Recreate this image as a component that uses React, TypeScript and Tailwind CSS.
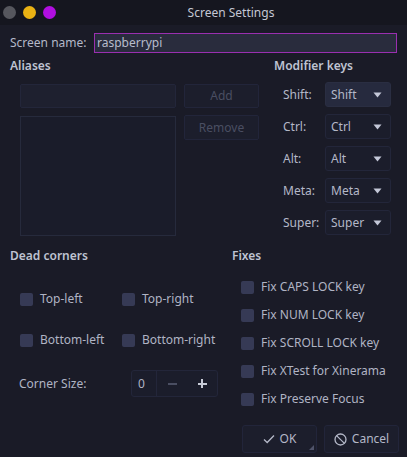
import React from "react";

const font = { fontFamily: '"Noto Sans", "Open Sans", sans-serif' };

function Caret() {
  return (
    <svg width="9" height="6" viewBox="0 0 9 6" className="shrink-0">
      <path d="M0.5 0.5 L8.5 0.5 L4.5 5.5 Z" fill="#c4c8d8" />
    </svg>
  );
}

function Combo({ label, value, active }: { label: string; value: string; active?: boolean }) {
  return (
    <div className="flex items-center h-[25px]">
      <div className="w-[51px] pl-[9px] text-[12px] text-[#b4b8c8]">{label}</div>
      <div
        className={
          "w-[66px] h-[25px] rounded-[3px] border flex items-center justify-between pl-[5px] pr-[8px] text-[12px] text-[#b4b8c8] " +
          (active ? "bg-[#262a3e] border-[#2a2e42]" : "bg-[#1b1d2b] border-[#23263a]")
        }
      >
        <span>{value}</span>
        <Caret />
      </div>
    </div>
  );
}

function Check({ label, w }: { label: string; w?: string }) {
  return (
    <div className={"flex items-center gap-[7px] h-[16px] " + (w ?? "")}>
      <div className="w-[13px] h-[13px] rounded-[2px] bg-[#363a55]" />
      <span className="text-[12px] text-[#b0b4c4]">{label}</span>
    </div>
  );
}

export default function App() {
  return (
    <div style={font} className="w-[407px] h-[457px] bg-[#1a1b27] flex flex-col overflow-hidden">
      {/* Title bar */}
      <div className="h-[25px] bg-[#15161f] flex items-center relative">
        <div className="flex items-center gap-[7px] pl-[3px]">
          <div className="w-[13px] h-[13px] rounded-full bg-[#56575e]" />
          <div className="w-[13px] h-[13px] rounded-full bg-[#eab214]" />
          <div className="w-[13px] h-[13px] rounded-full bg-[#b10fe0]" />
        </div>
        <div className="absolute left-[55px] right-0 text-center text-[12px] text-[#c4c7d4]">Screen Settings</div>
      </div>

      <div className="flex flex-col px-[10px]">
        {/* Screen name */}
        <div className="flex items-center mt-[8px] h-[20px]">
          <span className="w-[84px] text-[12px] text-[#b4b8c8]">Screen name:</span>
          <div className="flex-1 h-[20px] border border-[#9a2fb0] bg-[#292c3d] flex items-center px-[2px] text-[12px] text-[#b8bccc]">
            raspberrypi
          </div>
        </div>

        {/* Aliases + Modifier keys */}
        <div className="flex mt-[3px]">
          <div className="w-[264px] flex flex-col">
            <div className="text-[12px] font-semibold text-[#bfc3d2] h-[20px] flex items-center">Aliases</div>
            <div className="flex gap-[8px] pl-[10px] mt-[8px]">
              <div className="flex flex-col gap-[8px]">
                <div className="w-[156px] h-[24px] rounded-[2px] bg-[#1e202f] border border-[#23263a]" />
                <div className="w-[156px] h-[120px] bg-[#1a1c2a] border border-[#262a3c]" />
              </div>
              <div className="flex flex-col gap-[7px]">
                <div className="w-[75px] h-[24px] rounded-[2px] bg-[#1c1e2c] border border-[#22253a] flex items-center justify-center text-[12px] text-[#4a4e62]">Add</div>
                <div className="w-[75px] h-[25px] rounded-[2px] bg-[#1c1e2c] border border-[#22253a] flex items-center justify-center text-[12px] text-[#4a4e62]">Remove</div>
              </div>
            </div>
          </div>
          <div className="flex flex-col">
            <div className="text-[12px] font-semibold text-[#bfc3d2] h-[20px] flex items-center">Modifier keys</div>
            <div className="flex flex-col gap-[7px] mt-[6px]">
              <Combo label="Shift:" value="Shift" active />
              <Combo label="Ctrl:" value="Ctrl" />
              <Combo label="Alt:" value="Alt" />
              <Combo label="Meta:" value="Meta" />
              <Combo label="Super:" value="Super" />
            </div>
          </div>
        </div>

        {/* Dead corners + Fixes */}
        <div className="flex mt-[10px]">
          <div className="w-[222px] flex flex-col">
            <div className="text-[12px] font-semibold text-[#bfc3d2] h-[20px] flex items-center">Dead corners</div>
            <div className="flex flex-col pl-[10px] mt-[25px] gap-[25px]">
              <div className="flex">
                <Check label="Top-left" w="w-[102px]" />
                <Check label="Top-right" />
              </div>
              <div className="flex">
                <Check label="Bottom-left" w="w-[102px]" />
                <Check label="Bottom-right" />
              </div>
            </div>
            <div className="flex items-center pl-[9px] mt-[22px]">
              <span className="w-[112px] text-[12px] text-[#b0b4c4]">Corner Size:</span>
              <div className="flex h-[27px] rounded-[3px] border border-[#23263a] bg-[#1b1d2b]">
                <div className="w-[25px] flex items-center pl-[6px] text-[12px] text-[#b0b4c4] border-r border-[#23263a]">0</div>
                <div className="w-[30px] flex items-center justify-center">
                  <div className="w-[9px] h-[2px] bg-[#4a4e62]" />
                </div>
                <div className="w-[30px] flex items-center justify-center relative">
                  <div className="w-[9px] h-[2px] bg-[#c8ccd8]" />
                  <div className="w-[2px] h-[9px] bg-[#c8ccd8] absolute" />
                </div>
              </div>
            </div>
          </div>
          <div className="flex flex-col">
            <div className="text-[12px] font-semibold text-[#bfc3d2] h-[20px] flex items-center">Fixes</div>
            <div className="flex flex-col pl-[9px] mt-[13px] gap-[12px]">
              <Check label="Fix CAPS LOCK key" />
              <Check label="Fix NUM LOCK key" />
              <Check label="Fix SCROLL LOCK key" />
              <Check label="Fix XTest for Xinerama" />
              <Check label="Fix Preserve Focus" />
            </div>
          </div>
        </div>

        {/* Buttons */}
        <div className="flex justify-end gap-[7px] mt-[18px] -mr-[2px]">
          <div className="relative w-[75px] h-[28px] rounded-[3px] bg-[#1c1e2c] border border-[#22253a] flex items-center justify-center gap-[5px] text-[12px] text-[#b4b8c8]">
            <svg width="12" height="10" viewBox="0 0 12 10"><path d="M1 5.5 L4.2 8.5 L11 1.5" stroke="#b4b8c8" strokeWidth="1.3" fill="none" /></svg>
            <span>OK</span>
            <svg width="5" height="5" viewBox="0 0 5 5" className="absolute right-[2px] bottom-[2px]"><path d="M5 0 L5 5 L0 5 Z" fill="#50546a" /></svg>
          </div>
          <div className="w-[75px] h-[28px] rounded-[3px] bg-[#1c1e2c] border border-[#22253a] flex items-center justify-center gap-[5px] text-[12px] text-[#b4b8c8]">
            <svg width="13" height="13" viewBox="0 0 13 13"><circle cx="6.5" cy="6.5" r="5.5" stroke="#b4b8c8" strokeWidth="1.3" fill="none" /><path d="M2.6 2.6 L10.4 10.4" stroke="#b4b8c8" strokeWidth="1.3" /></svg>
            <span>Cancel</span>
          </div>
        </div>
      </div>
    </div>
  );
}
